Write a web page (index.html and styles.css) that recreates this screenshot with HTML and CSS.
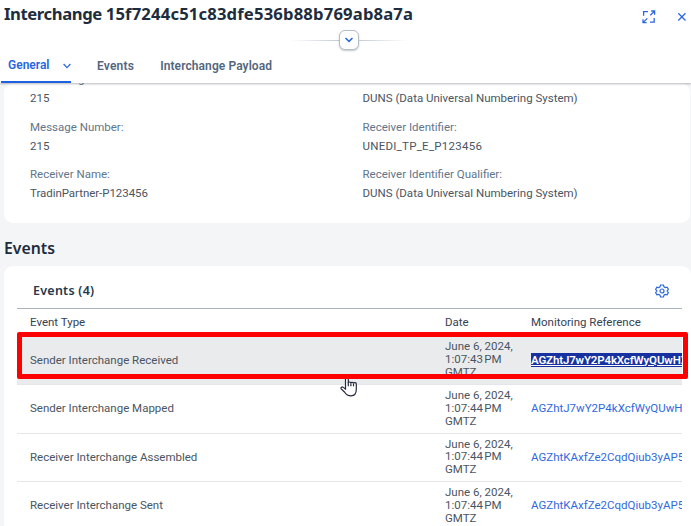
FILE: index.html
```html
<!DOCTYPE html>
<html lang="en">
<head>
<meta charset="utf-8">
<title>Interchange</title>
<link rel="stylesheet" href="styles.css">
</head>
<body>
<header class="header">
  <div class="titlebar">
    <h1 class="title"><span class="title-kind">Interchange </span>15f7244c51c83dfe536b88b769ab8a7a</h1>
    <div class="actions">
      <svg width="14" height="14" viewBox="0 0 14 14"><path d="M1.6 5.8V1.6H6M8 12.1h4.200V8M8.300 5.300L12.500 1.100M9.200 1h3.400v3.700M5.300 8.400L1.100 12.600M1 9.200v3.500h3.600"/></svg>
      <svg width="10" height="10" viewBox="0 0 10 10"><path d="M1.300 1.300l7.200 7.200M8.500 1.300L1.300 8.500"/></svg>
    </div>
  </div>
  <div class="expander">
    <span class="expander-line"></span>
    <button class="expander-btn" aria-label="Expand header"><svg width="10" height="6" viewBox="0 0 10 6"><path d="M1.500 1l3.500 3.300L8.500 1"/></svg></button>
    <span class="expander-line expander-line-end"></span>
  </div>
  <nav class="tabs">
    <a class="tab tab-active">General<svg width="8" height="6" viewBox="0 0 8 6"><path d="M.6 1l3.400 3.600L7.400 1"/></svg></a>
    <a class="tab tab-events">Events</a>
    <a class="tab tab-payload">Interchange Payload</a>
  </nav>
</header>
<main class="content">
  <section class="card details">
    <dl class="col">
      <dt>Interchange Number:</dt><dd>215</dd>
      <dt>Message Number:</dt><dd>215</dd>
      <dt>Receiver Name:</dt><dd class="partner">TradinPartner-P123456</dd>
    </dl>
    <dl class="col">
      <dt></dt><dd>DUNS (Data Universal Numbering System)</dd>
      <dt>Receiver Identifier:</dt><dd class="unedi">UNEDI_TP_E_P123456</dd>
      <dt>Receiver Identifier Qualifier:</dt><dd>DUNS (Data Universal Numbering System)</dd>
    </dl>
  </section>
  <h2 class="section-title">Events</h2>
  <section class="card events">
    <div class="toolbar">
      <h3>Events (4)</h3>
      <svg width="14" height="14" viewBox="0 0 14 14"><path d="M5.600 1h2.800l.6 1.800 1.200.7 1.900-.4 1.300 2.300L12.100 7l1.300 1.600-1.300 2.300-1.900-.4-1.200.7-.6 1.800H5.600L5 11.200l-1.200-.7-1.900.4L.6 8.600 1.900 7 .6 5.400l1.300-2.300 1.900.4L5 2.800z"/><circle cx="7" cy="7" r="2"/></svg>
    </div>
    <div class="table">
      <div class="row head"><span>Event Type</span><span>Date</span><span>Monitoring Reference</span></div>
      <div class="row selected"><span>Sender Interchange Received</span><span class="date">June 6, 2024,<br><span class="time">1:07:43 PM</span><br>GMTZ</span><a class="ref"><mark>AGZhtJ7wY2P4kXcfWyQUwHXk</mark></a></div>
      <div class="row"><span>Sender Interchange Mapped</span><span class="date">June 6, 2024,<br><span class="time">1:07:44 PM</span><br>GMTZ</span><a class="ref">AGZhtJ7wY2P4kXcfWyQUwHXk</a></div>
      <div class="row"><span>Receiver Interchange Assembled</span><span class="date">June 6, 2024,<br><span class="time">1:07:44 PM</span><br>GMTZ</span><a class="ref">AGZhtKAxfZe2CqdQiub3yAP5</a></div>
      <div class="row"><span>Receiver Interchange Sent</span><span class="date">June 6, 2024,<br><span class="time">1:07:44 PM</span><br>GMTZ</span><a class="ref">AGZhtKAxfZe2CqdQiub3yAP5</a></div>
      <svg class="pointer" width="18" height="23" viewBox="0 0 18 23"><path d="M5.500 14V3.300c0-2 2.800-2 2.800 0V8c0-1.400 2.500-1.300 2.600.2 0-1.300 2.500-1.200 2.600.3 0-1.200 2.800-1.100 2.800.6v5.200c0 3.600-1.300 6.500-5.300 6.500-3.500 0-4.800-1.200-6.300-3.600L1.200 13.900c-.9-1.500.9-2.700 2.100-1.500z"/><path d="M8.300 7.500v3.700M10.900 8.200v3M13.500 8.500v2.700"/></svg>
      <div class="highlight"></div>
    </div>
  </section>
</main>
</body>
</html>
```
FILE: styles.css
```css
* { box-sizing: border-box; margin: 0; }
body {
  width: 691px; height: 526px; overflow: hidden;
  display: flex; flex-direction: column;
  background: #f4f5f7; color: #4b5561;
  font: 11.5px/14px Roboto, "Liberation Sans", sans-serif;
}
svg { fill: none; stroke: #2d68e0; stroke-width: 1.3; }
.header {
  position: relative; flex: none; height: 83px; background: #fff;
  box-shadow: 0 1px 2px rgba(70, 80, 90, .4);
}
.titlebar { display: flex; justify-content: space-between; height: 30px; padding: 3px 4px 0; }
.title { font: 700 16.65px/22px "Noto Sans", sans-serif; letter-spacing: .16px; color: #1d2d3e; }
.title-kind { letter-spacing: -.4px; }
.actions { display: flex; align-items: center; gap: 21px; height: 27px; }
.expander { display: flex; align-items: center; justify-content: center; height: 20px; padding-left: 7px; }
.expander-line { width: 49px; height: 1px; background: linear-gradient(90deg, transparent, #c6ccd3); }
.expander-line-end { background: linear-gradient(270deg, transparent, #c6ccd3); }
.expander-btn {
  display: flex; align-items: center; justify-content: center; width: 20px; height: 20px; padding: 0;
  border: 1px solid #b5bdc7; border-radius: 6px; background: #fff; box-shadow: 0 1px 2px rgba(60, 70, 80, .3);
}
.expander-btn svg { stroke-width: 1.6; }
.tabs { display: flex; height: 33px; padding-left: 1px; }
.tab { padding-top: 9px; font-size: 12px; font-weight: 600; line-height: 15px; color: #53667c; white-space: nowrap; }
.tab-active { width: 70px; padding: 8px 0 0 7px; color: #2864e0; border-bottom: 2px solid #1f60e0; }
.tab-active svg { margin-left: 14px; }
.tab-events { margin-left: 26px; letter-spacing: .2px; }
.tab-payload { margin-left: 26px; letter-spacing: .09px; }
.content { flex: 1; min-height: 0; padding-left: 4px; }
.card { background: #fff; border-radius: 9px; }
.details { display: grid; grid-template-columns: 332.500px 1fr; height: 140px; padding-left: 26px; margin-right: 1px; overflow: hidden; }
.col { margin-top: -11px; }
.col dt { height: 19px; line-height: 15px; color: #62758a; }
.col dd { height: 28.700px; line-height: 15px; }
.partner { letter-spacing: -.05px; }
.unedi { letter-spacing: .25px; }
.section-title { height: 43px; padding-top: 14px; font: 600 15.8px/22px "Noto Sans", sans-serif; color: #1d2d3e; }
.events { height: 270px; padding: 0 9px 0 13px; }
.toolbar { display: flex; align-items: center; justify-content: space-between; height: 43px; padding: 7px 13px 0 16px; border-bottom: 1px solid #a8b3be; }
.toolbar h3 { font: 600 12.5px/16px "Noto Sans", sans-serif; letter-spacing: .25px; color: #27384a; }
.toolbar svg { stroke-width: 1.2; }
.table { position: relative; }
.row {
  display: grid; grid-template-columns: 415px 86px 1fr; align-items: center;
  height: 48.600px; padding: 0 0 1px 13px; border-bottom: 1px solid #e4e6e9; overflow: hidden;
}
.head { height: 27px; padding-bottom: 2px; color: #354353; border: 0; }
.selected { height: 49px; background: #e9ebed; }
.date { line-height: 12.900px; }
.time { word-spacing: -1.5px; }
.ref { overflow: hidden; white-space: nowrap; color: #3169e0; }
.ref mark { background: #1732a0; color: #fff; font-weight: 600; letter-spacing: -.15px; text-decoration: underline; }
.highlight { position: absolute; left: 0; top: 23px; width: 671px; height: 47px; border: 5px solid #fe0000; border-radius: 2px; }
.pointer { position: absolute; left: 323px; top: 66px; fill: #fff; stroke: #24283b; stroke-width: 1.2; }
```
